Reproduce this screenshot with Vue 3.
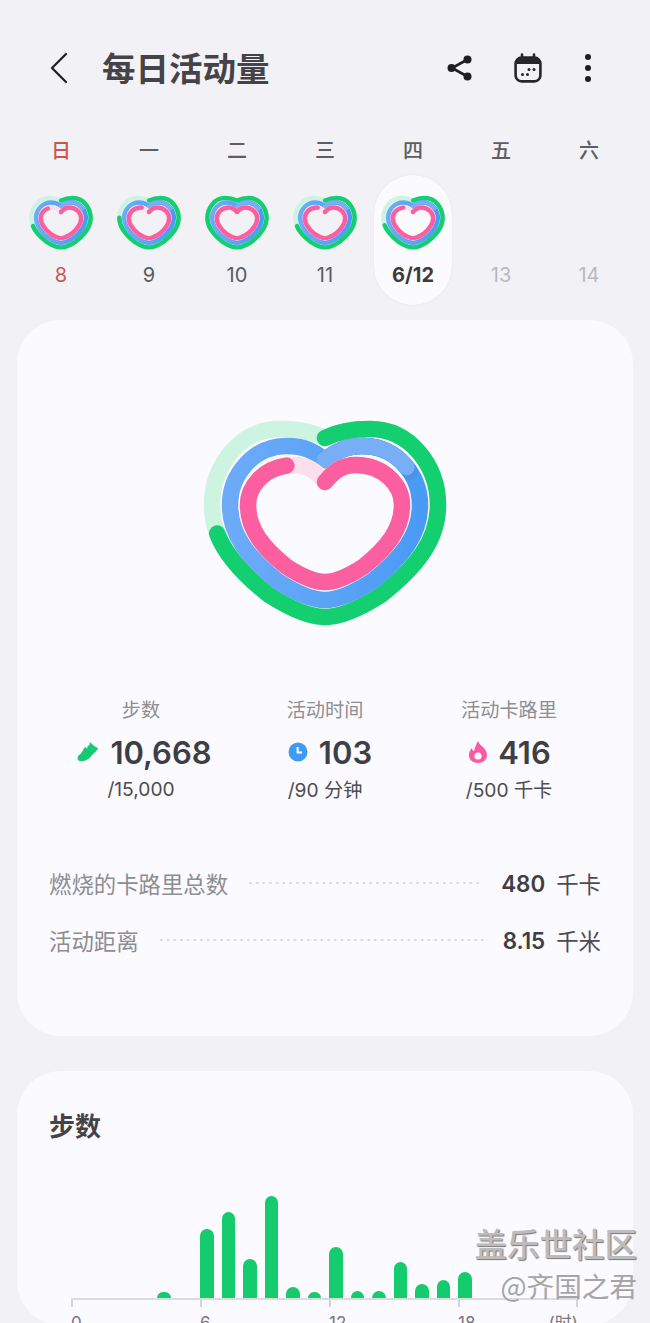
<script setup>
const cx = 325

function heart(hw, top, notch, bottom) {
  const ym = 505
  const d = notch - top
  const b = bottom - ym
  const right = `C${cx + 0.12 * hw} ${notch - 0.65 * d} ${cx + 0.22 * hw} ${top} ${cx + 0.4 * hw} ${top} ` +
    `C${cx + 0.76 * hw} ${top} ${cx + hw} ${ym - 0.5 * (ym - top)} ${cx + hw} ${ym} ` +
    `C${cx + hw} ${ym + 0.32 * b} ${cx + 0.8 * hw} ${ym + 0.56 * b} ${cx + 0.5 * hw} ${ym + 0.8 * b} ` +
    `C${cx + 0.3 * hw} ${ym + 0.93 * b} ${cx + 0.14 * hw} ${bottom} ${cx} ${bottom}`
  const left = `C${cx - 0.14 * hw} ${bottom} ${cx - 0.3 * hw} ${ym + 0.93 * b} ${cx - 0.5 * hw} ${ym + 0.8 * b} ` +
    `C${cx - 0.8 * hw} ${ym + 0.56 * b} ${cx - hw} ${ym + 0.32 * b} ${cx - hw} ${ym} ` +
    `C${cx - hw} ${ym - 0.5 * (ym - top)} ${cx - 0.76 * hw} ${top} ${cx - 0.4 * hw} ${top} ` +
    `C${cx - 0.22 * hw} ${top} ${cx - 0.12 * hw} ${notch - 0.65 * d} ${cx} ${notch}`
  return `M${cx} ${notch} ${right} ${left}`
}

const greenPath = heart(113, 429, 438, 617)
const bluePath = heart(95, 446, 460, 600)
const pinkPath = heart(77, 465, 482, 582)

function rings(g, p) {
  return [
    { d: greenPath, color: '#cdf4e0', len: 100 },
    { d: greenPath, color: '#14cf70', len: g },
    { d: bluePath, color: 'url(#blueGrad)', len: 100 },
    { d: bluePath, color: '#4a93ea', len: 17.5 },
    { d: bluePath, color: '#78aef6', len: 16.5 },
    { d: pinkPath, color: '#fbdfec', len: 100 },
    { d: pinkPath, color: '#fb5f9f', len: p }
  ]
}

const days = [
  { week: '日', num: '8', cls: 'sun', g: 71, p: 87 },
  { week: '一', num: '9', g: 76, p: 92 },
  { week: '二', num: '10', g: 100, p: 100 },
  { week: '三', num: '11', g: 71, p: 92 },
  { week: '四', num: '6/12', cls: 'today', g: 71.5, p: 90 },
  { week: '五', num: '13', cls: 'future' },
  { week: '六', num: '14', cls: 'future' }
]

const stats = [
  { label: '活动时间', value: '103', sub: '/90 分钟', icon: 'clock' },
  { label: '活动卡路里', value: '416', sub: '/500 千卡', icon: 'flame' }
]

const details = [
  { label: '燃烧的卡路里总数', value: '480', unit: '千卡' },
  { label: '活动距离', value: '8.15', unit: '千米' }
]

const bars = [0, 0, 0, 0, 6, 0, 69, 86, 39, 102, 11, 6, 51, 7, 7, 36, 14, 18, 26, 0, 0, 0, 0]
const ticks = ['0', '6', '12']
</script>

<template>
  <div class="page">
    <svg class="defs" width="0" height="0">
      <defs>
        <linearGradient id="blueGrad" gradientUnits="userSpaceOnUse" x1="230" y1="0" x2="420" y2="0">
          <stop offset="0" stop-color="#6dabf8" />
          <stop offset="1" stop-color="#4a9bf5" />
        </linearGradient>
      </defs>
    </svg>

    <header class="top">
      <svg class="back" width="20" height="32" viewBox="0 0 20 32">
        <path d="M17 2 3 16l14 14" fill="none" stroke="#222" stroke-width="2.3" stroke-linecap="round" stroke-linejoin="round" />
      </svg>
      <h1>每日活动量</h1>
      <div class="actions">
        <svg width="28" height="28" viewBox="0 0 28 28">
          <path d="M21.5 5.5 6 14l15.5 8.5" fill="none" stroke="#1e1e22" stroke-width="2.6" />
          <circle cx="21.5" cy="5.5" r="4" fill="#1e1e22" />
          <circle cx="5.5" cy="14" r="4" fill="#1e1e22" />
          <circle cx="21.5" cy="22.5" r="4" fill="#1e1e22" />
        </svg>
        <svg width="30" height="30" viewBox="1 0 30 30">
          <rect x="2.6" y="4.6" width="24.8" height="23.8" rx="6" fill="none" stroke="#26262a" stroke-width="2.6" />
          <path d="M3 11V9a5 5 0 0 1 5-5h14a5 5 0 0 1 5 5v2z" fill="#26262a" />
          <path d="M9 1.5v5M21 1.5v5" stroke="#26262a" stroke-width="2.6" stroke-linecap="round" />
          <circle cx="16" cy="16.5" r="1.5" fill="#26262a" />
          <circle cx="21" cy="16.5" r="1.5" fill="#26262a" />
          <circle cx="9.5" cy="21.5" r="1.5" fill="#26262a" />
          <circle cx="14.5" cy="21.5" r="1.5" fill="#26262a" />
        </svg>
        <svg width="8" height="30" viewBox="0 0 8 30">
          <circle cx="4" cy="4" r="3" fill="#1e1e22" />
          <circle cx="4" cy="15" r="3" fill="#1e1e22" />
          <circle cx="4" cy="26" r="3" fill="#1e1e22" />
        </svg>
      </div>
    </header>

    <div class="week">
      <div v-for="d in days" :key="d.num" class="col" :class="d.cls">
        <div class="wk">{{ d.week }}</div>
        <div class="cell">
          <svg v-if="d.g" class="mini" viewBox="203 418 244 212">
            <path
              v-for="(r, i) in rings(d.g, d.p)"
              :key="i"
              :d="r.d"
              :stroke="r.color"
              :stroke-dasharray="r.len >= 100 ? 'none' : r.len + ' 100'"
              pathLength="100"
              fill="none"
              stroke-width="17"
              stroke-linecap="round"
            />
          </svg>
          <div v-else class="mini-empty"></div>
          <div class="num">{{ d.num }}</div>
        </div>
      </div>
    </div>

    <section class="card summary">
      <svg class="big" width="250" height="220" viewBox="200 415 250 220">
        <path
          v-for="(r, i) in rings(71.5, 90)"
          :key="i"
          :d="r.d"
          :stroke="r.color"
          :stroke-dasharray="r.len >= 100 ? 'none' : r.len + ' 100'"
          pathLength="100"
          fill="none"
          stroke-width="16.5"
          stroke-linecap="round"
        />
      </svg>

      <div class="stats">
        <div class="stat">
          <div class="stat-label">步数</div>
          <div class="stat-value">
            <svg width="23" height="22" viewBox="0 0 23 22">
              <path d="M3 14c2-1 4-4 5-7l2-1 1 2 1-4 1 1 1-4c2 2 5 5 8 6 0 2-3 4-6 7-3 4-6 6-10 6H4c-3 0-3-4-1-6z" fill="#17c972" />
            </svg>
            <span>10,668</span>
          </div>
          <div class="stat-sub">/15,000</div>
        </div>
        <div v-for="s in stats" :key="s.label" class="stat">
          <div class="stat-label">{{ s.label }}</div>
          <div class="stat-value">
            <svg v-if="s.icon === 'clock'" width="20" height="20" viewBox="0 0 20 20">
              <circle cx="10" cy="10" r="9.5" fill="#3e9cf4" />
              <path d="M9.6 5v5.6h4.4" fill="none" stroke="#fff" stroke-width="2" />
            </svg>
            <svg v-else width="18" height="22" viewBox="0 0 18 22">
              <path d="M9 0c1 3 3 4 5 6 2 2 4 5 4 8 0 5-4 8-9 8s-9-3-9-8c0-3 1-5 3-7 0 2 1 3 2 3 1-3 2-7 4-10z" fill="#fb5aa0" />
              <circle cx="9" cy="15" r="3.6" fill="#fff" />
            </svg>
            <span>{{ s.value }}</span>
          </div>
          <div class="stat-sub">{{ s.sub }}</div>
        </div>
      </div>

      <div class="details">
        <div v-for="d in details" :key="d.label" class="row">
          <span class="row-label">{{ d.label }}</span>
          <span class="dots"></span>
          <span class="row-value">{{ d.value }}</span>
          <span class="row-unit">{{ d.unit }}</span>
        </div>
      </div>
    </section>

    <section class="card steps">
      <h2>步数</h2>
      <div class="chart">
        <div class="bars">
          <div v-for="(h, i) in bars" :key="i" class="slot">
            <div class="bar" :style="{ height: h + 'px' }"></div>
          </div>
        </div>
        <div class="axis">
          <div v-for="t in ticks" :key="t" class="tick">
            <span>{{ t }}</span>
          </div>
          <div class="tick last">
            <span>18</span>
            <span>(时)</span>
          </div>
        </div>
      </div>
    </section>

    <div class="mark">
      <div class="mark-a">盖乐世社区</div>
      <div class="mark-b">@齐国之君</div>
    </div>
  </div>
</template>

<style scoped>
.page {
  position: relative;
  width: 650px;
  height: 1323px;
  overflow: hidden;
  background: #f2f2f6;
  font-family: Inter, "Noto Sans CJK SC", sans-serif;
  color: #3d3d42;
}

.defs {
  position: absolute;
}

.top {
  display: flex;
  align-items: center;
  height: 136px;
  padding: 0 58px 0 49px;
  box-sizing: border-box;
}

.back {
  flex: none;
}

h1 {
  margin: 0 0 4px 33px;
  font-size: 33.5px;
  font-weight: 700;
  color: #444448;
}

.actions {
  display: flex;
  align-items: center;
  gap: 40px;
  margin-left: auto;
}

.week {
  display: grid;
  grid-template-columns: repeat(7, 88px);
  padding: 0 17px;
  height: 166px;
  margin-top: 3px;
}

.col {
  display: flex;
  flex-direction: column;
  align-items: center;
}

.wk {
  height: 24px;
  line-height: 24px;
  font-size: 20px;
  font-weight: 500;
  color: #5d5d62;
  margin-bottom: 12px;
}

.cell {
  display: flex;
  flex-direction: column;
  align-items: center;
  width: 78px;
  height: 130px;
  padding-top: 20px;
  box-sizing: border-box;
  border-radius: 39px;
}

.mini {
  width: 64px;
  height: 56px;
}

.mini-empty {
  height: 56px;
}

.num {
  margin-top: 11px;
  height: 26px;
  line-height: 26px;
  font-size: 20px;
  color: #5a5a5f;
}

.sun .wk,
.sun .num {
  color: #c8584f;
}

.today .cell {
  background: #fbfbfd;
  box-shadow: 0 0 2px rgba(0, 0, 0, 0.08);
}

.today .num {
  font-weight: 700;
  color: #3a3a3f;
}

.future .num {
  color: #b9b9bd;
}

.card {
  margin: 0 17px;
  background: #fbfaff;
  border-radius: 44px;
  box-sizing: border-box;
  padding-left: 32px;
  padding-right: 32px;
}

.summary {
  height: 716px;
  padding-top: 95px;
  margin-top: 15px;
}

.big {
  display: block;
  margin: 0 auto;
}

.stats {
  display: grid;
  grid-template-columns: repeat(3, 1fr);
  margin-top: 62px;
  text-align: center;
}

.stat-label {
  height: 26px;
  line-height: 26px;
  font-size: 19.2px;
  color: #8d8d92;
}

.stat-value {
  display: flex;
  align-items: center;
  justify-content: center;
  gap: 11px;
  height: 40px;
  margin-top: 9px;
  font-size: 31px;
  font-weight: 600;
  color: #3e3e44;
}

.stat:nth-child(1) .stat-value {
  padding-left: 6px;
}

.stat:nth-child(2) .stat-value {
  padding-left: 10px;
}

.stat:nth-child(3) .stat-value {
  padding-left: 2px;
}

.stat-sub {
  height: 26px;
  line-height: 26px;
  margin-top: 4px;
  font-size: 19.2px;
  color: #4c4c51;
}

.stat:nth-child(n + 2) .stat-sub {
  margin-top: 5px;
}

.details {
  margin-top: 65px;
}

.row {
  display: flex;
  align-items: center;
  height: 30px;
  margin-bottom: 27px;
}

.row-label {
  font-size: 22.4px;
  color: #8d8d92;
}

.dots {
  flex: 1;
  height: 2px;
  margin: 0 19px 0 19px;
  background-image: radial-gradient(circle, #d3d3d8 1px, transparent 1.2px);
  background-size: 6.7px 2px;
}

.row-value {
  font-size: 22.4px;
  font-weight: 600;
  color: #3e3e44;
}

.row-unit {
  margin-left: 11px;
  font-size: 22.4px;
  color: #4c4c51;
}

.steps {
  height: 254px;
  margin-top: 35px;
  padding-top: 38px;
  overflow: hidden;
}

h2 {
  margin: 0;
  height: 36px;
  line-height: 36px;
  font-size: 26px;
  font-weight: 700;
  color: #444448;
}

.chart {
  width: 507px;
  margin-left: 22px;
}

.bars {
  display: flex;
  align-items: flex-end;
  height: 153px;
}

.slot {
  flex: 0 0 21.5px;
  display: flex;
  align-items: flex-end;
}

.bar {
  width: 13.5px;
  background: #14cc6e;
  border-radius: 7px 7px 0 0;
}

.axis {
  display: flex;
  border-top: 2px solid #dcdce0;
}

.tick {
  position: relative;
  flex: 0 0 129px;
  box-sizing: border-box;
  padding-top: 12px;
  font-size: 17px;
  line-height: 22px;
  color: #77777c;
}

.tick::before {
  content: '';
  position: absolute;
  top: 0;
  left: 0;
  width: 2px;
  height: 7px;
  background: #d4d4d8;
}

.tick.last {
  flex: 1;
  display: flex;
  justify-content: space-between;
}

.tick.last::after {
  content: '';
  position: absolute;
  top: 0;
  right: 0;
  width: 2px;
  height: 7px;
  background: #d4d4d8;
}

.mark {
  position: absolute;
  right: 13px;
  top: 1224px;
  text-align: right;
  font-family: "Noto Sans CJK SC", sans-serif;
}

.mark-a {
  font-size: 32.5px;
  line-height: 38px;
  font-weight: 500;
  color: #bcbcbc;
  text-shadow: 1px 1px 1px #777;
}

.mark-b {
  margin-top: 6px;
  font-size: 27.6px;
  line-height: 34px;
  color: #a5a5a5;
}
</style>

<style>
body {
  background: #f2f2f6;
}
</style>
